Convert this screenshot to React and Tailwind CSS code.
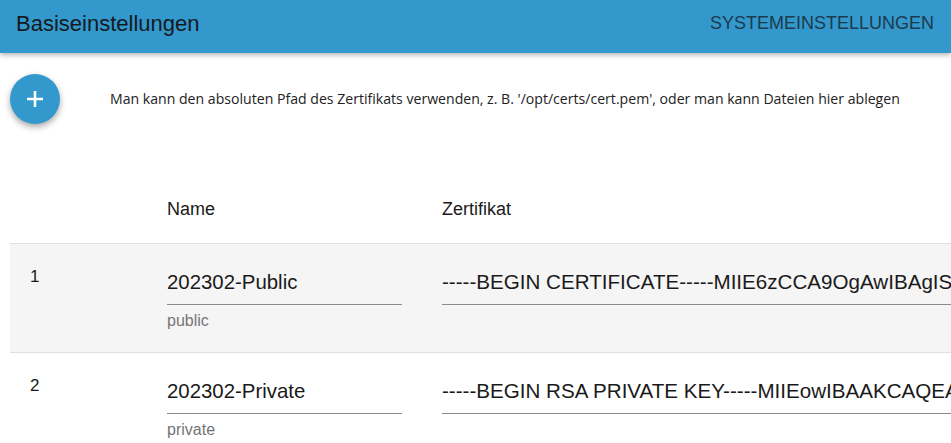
import React from "react";

const rows = [
  { n: "1", name: "202302-Public", helper: "public", cert: "-----BEGIN CERTIFICATE-----MIIE6zCCA9OgAwIBAgISA2k7x0FqZ1bQm8eR3KpV0wDQYJKoZIhvcNAQEL", bg: "bg-[#f5f5f5]" },
  { n: "2", name: "202302-Private", helper: "private", cert: "-----BEGIN RSA PRIVATE KEY-----MIIEowIBAAKCAQEA1x9kQ2mVbT3pN7rW8sY0uZ4cL6fH2jD5gK", bg: "bg-white" },
];

export default function App() {
  return (
    <div className="w-[951px] h-[443px] overflow-hidden bg-white" style={{ fontFamily: '"Liberation Sans", Arial, sans-serif' }}>
      <header className="relative z-10 h-[53px] bg-[#3398cc] flex items-center justify-between pl-4 pr-[17px] shadow-[0_2px_5px_rgba(0,0,0,0.3)]">
        <div className="text-[22px] leading-none text-[#151a1e] pb-[5px]">Basiseinstellungen</div>
        <div className="text-[18px] leading-none text-[#1d3a4e] pb-[7px]">SYSTEMEINSTELLUNGEN</div>
      </header>

      <div className="flex items-center pl-[10px] pt-[21px]">
        <button className="w-[50px] h-[50px] rounded-full bg-[#3398cc] flex items-center justify-center shadow-[0_3px_6px_rgba(0,0,0,0.35)]">
          <svg width="20" height="20" viewBox="0 0 20 20">
            <path d="M10 2v16M2 10h16" stroke="white" strokeWidth="2.6" />
          </svg>
        </button>
        <div className="ml-[50px] text-[14.1px] text-[#222]" style={{ fontFamily: '"Open Sans", sans-serif' }}>
          Man kann den absoluten Pfad des Zertifikats verwenden, z. B. '/opt/certs/cert.pem', oder man kann Dateien hier ablegen
        </div>
      </div>

      <div className="ml-[10px]">
        <div className="grid grid-cols-[157px_275px_1fr] pt-[73px] pb-[22px] border-b border-[#e0e0e0] text-[18px] leading-[24px] text-[#1a1a1a]">
          <div></div>
          <div>Name</div>
          <div>Zertifikat</div>
        </div>
        {rows.map((r) => (
          <div key={r.n} className={`grid grid-cols-[157px_275px_1fr] pt-[24px] pb-[21px] border-b border-[#e0e0e0] ${r.bg}`}>
            <div className="pl-[20px] text-[17px] leading-[18px] text-[#1a1a1a]">{r.n}</div>
            <div className="w-[235px] pt-[2px]">
              <div className="text-[20.4px] leading-[24px] text-[#1a1a1a] pb-[10px] border-b border-[#8a8a8a]">{r.name}</div>
              <div className="mt-[6px] text-[16px] leading-[20px] text-[#757575]">{r.helper}</div>
            </div>
            <div className="pt-[2px] w-[700px] overflow-hidden">
              <div className="text-[20.6px] leading-[24px] text-[#1a1a1a] pb-[10px] border-b border-[#8a8a8a] whitespace-nowrap">{r.cert}</div>
            </div>
          </div>
        ))}
      </div>
    </div>
  );
}
